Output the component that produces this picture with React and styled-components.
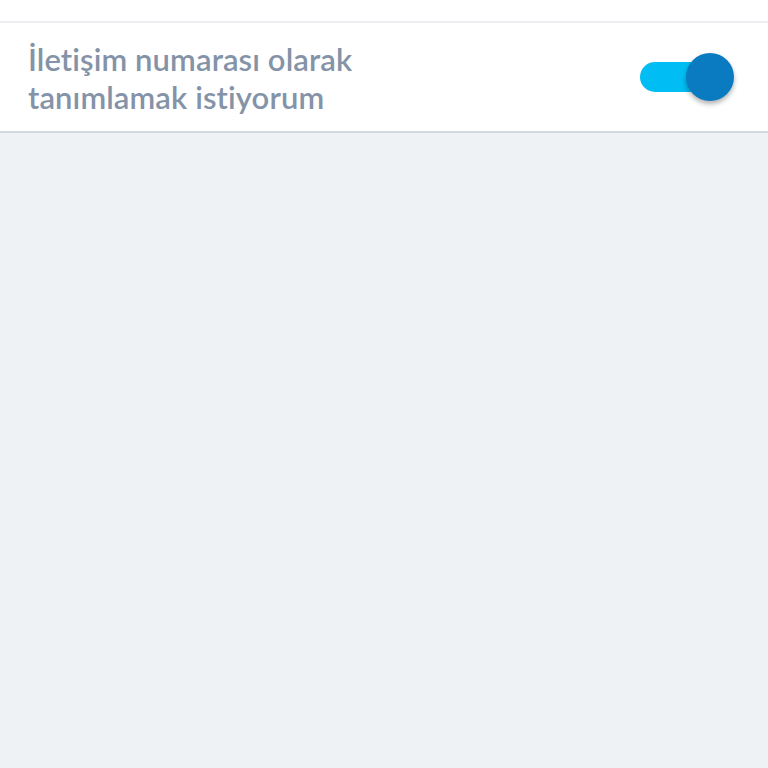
import styled, { createGlobalStyle } from "styled-components";

const GlobalStyle = createGlobalStyle`
    html, body {
        margin: 0;
        padding: 0;
        background: #eff2f5;
    }
    body {
        font-family: "Lato", "Noto Sans", sans-serif;
    }
`;

const Page = styled.div`
    min-height: 768px;
    background: #eff2f5;
`;

const TopBand = styled.div`
    height: 21px;
    background: #ffffff;
    border-bottom: 2px solid #eceef1;
`;

const Row = styled.div`
    display: flex;
    align-items: center;
    justify-content: space-between;
    height: 108px;
    padding: 0 34px 0 28px;
    background: #ffffff;
    border-bottom: 2px solid #d3d8de;
`;

const Label = styled.div`
    font-size: 31px;
    line-height: 38px;
    font-weight: 600;
    letter-spacing: 0.1px;
    color: #8493a7;
    margin-top: 2px;
`;

const Switch = styled.div`
    position: relative;
    width: 94px;
    height: 48px;
    flex-shrink: 0;
`;

const Track = styled.div`
    position: absolute;
    left: 0;
    top: 9px;
    width: 66px;
    height: 30px;
    border-radius: 15px;
    background: ${(p) => (p.$on ? "#00bdf4" : "#c6ccd4")};
`;

const Knob = styled.div`
    position: absolute;
    top: 0;
    left: ${(p) => (p.$on ? "46px" : "0")};
    width: 48px;
    height: 48px;
    border-radius: 50%;
    background: ${(p) => (p.$on ? "#0a7bc0" : "#f5f5f5")};
    box-shadow: 0 3px 5px rgba(0, 0, 0, 0.3);
`;

function App() {
    return (
        <>
            <GlobalStyle />
            <Page>
                <TopBand />
                <Row>
                    <Label>
                        İletişim numarası olarak
                        <br />
                        tanımlamak istiyorum
                    </Label>
                    <Switch>
                        <Track $on />
                        <Knob $on />
                    </Switch>
                </Row>
            </Page>
        </>
    );
}

export default App;
